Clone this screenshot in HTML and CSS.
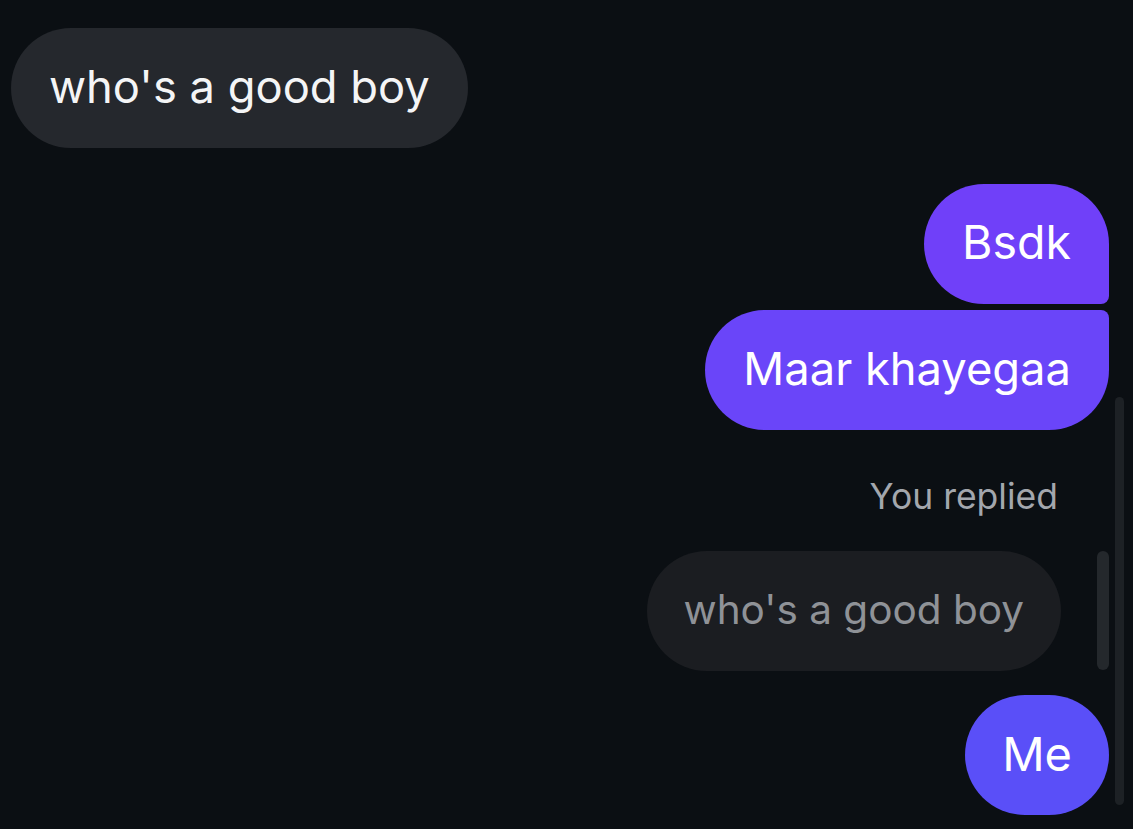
FILE: index.html
```html
<!DOCTYPE html>
<html>
<head>
<meta charset="utf-8">
<link rel="stylesheet" href="styles.css">
</head>
<body>
<div class="chat">
  <div class="row in first">
    <div class="bubble incoming">who's a good boy</div>
  </div>
  <div class="row out group">
    <div class="bubble outgoing top">Bsdk</div>
  </div>
  <div class="row out tight">
    <div class="bubble outgoing mid">Maar khayegaa</div>
  </div>
  <div class="reply-block">
    <div class="reply-label">You replied</div>
    <div class="bubble quoted">who's a good boy</div>
  </div>
  <div class="row out reply-answer">
    <div class="bubble outgoing me">Me</div>
  </div>
  <div class="track"></div>
  <div class="thumb"></div>
</div>
</body>
</html>
```

FILE: styles.css
```css
html, body {
  margin: 0;
  padding: 0;
  background: #0b0f13;
  height: 100%;
  overflow: hidden;
}
.chat {
  position: relative;
  display: flex;
  flex-direction: column;
  padding: 28px 24px 0 11px;
  font-family: Inter, "Noto Sans", sans-serif;
  height: 829px;
  box-sizing: border-box;
}
.row {
  display: flex;
}
.row.in { justify-content: flex-start; }
.row.out { justify-content: flex-end; }
.row.group { margin-top: 36px; }
.row.tight { margin-top: 6px; }
.row.reply-answer { margin-top: 24px; }
.bubble {
  height: 120px;
  box-sizing: border-box;
  border-radius: 60px;
  padding: 0 38px 4px;
  display: flex;
  align-items: center;
  font-size: 45.3px;
  letter-spacing: 0;
  white-space: nowrap;
}
.incoming {
  background: #25282d;
  color: #f4f5f6;
}
.outgoing {
  color: #ffffff;
}
.top {
  background: #7040f9;
  border-bottom-right-radius: 8px;
  font-size: 46.5px;
}
.mid {
  background: #6a45f9;
  border-top-right-radius: 8px;
}
.me {
  background: #5a4ff8;
  padding: 0 37px 4px;
  font-size: 47px;
}
.reply-block {
  display: flex;
  flex-direction: column;
  align-items: flex-end;
  margin-right: 48px;
  margin-top: 46px;
}
.reply-label {
  color: #a3a7ad;
  font-size: 35.5px;
  line-height: 42px;
  margin-right: 3px;
}
.quoted {
  margin-top: 33px;
  background: #1b1d21;
  color: #8f9297;
  font-size: 40.5px;
  padding: 0 37px 4px;
}
.track {
  position: absolute;
  left: 1115px;
  top: 397px;
  width: 9px;
  height: 408px;
  border-radius: 5px;
  background: #1d2125;
}
.thumb {
  position: absolute;
  left: 1097px;
  top: 551px;
  width: 12px;
  height: 119px;
  border-radius: 6px;
  background: #24282c;
}
```
